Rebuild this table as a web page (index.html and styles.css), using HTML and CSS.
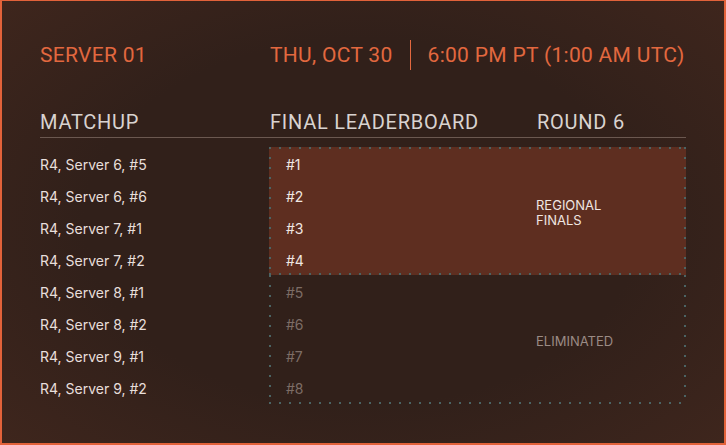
FILE: index.html
```html
<!DOCTYPE html>
<html lang="en">
<head>
<meta charset="utf-8">
<title>Server 01 Bracket</title>
<link rel="stylesheet" href="styles.css">
</head>
<body>
<div class="page">
  <header class="top">
    <div class="server">SERVER 01</div>
    <div class="when">
      <span class="date">THU, OCT 30</span>
      <span class="sep"></span>
      <span class="time">6:00 PM PT (1:00 AM UTC)</span>
    </div>
  </header>
  <div class="cols">
    <div class="col-h">MATCHUP</div>
    <div class="col-h">FINAL LEADERBOARD</div>
    <div class="col-h">ROUND 6</div>
  </div>
  <div class="body">
    <ul class="matchups">
      <li>R4, Server 6, #5</li>
      <li>R4, Server 6, #6</li>
      <li>R4, Server 7, #1</li>
      <li>R4, Server 7, #2</li>
      <li>R4, Server 8, #1</li>
      <li>R4, Server 8, #2</li>
      <li>R4, Server 9, #1</li>
      <li>R4, Server 9, #2</li>
    </ul>
    <div class="board">
      <div class="group advance">
        <ul class="ranks">
          <li>#1</li><li>#2</li><li>#3</li><li>#4</li>
        </ul>
        <div class="label">REGIONAL<br>FINALS</div>
      </div>
      <div class="group out">
        <ul class="ranks">
          <li>#5</li><li>#6</li><li>#7</li><li>#8</li>
        </ul>
        <div class="label">ELIMINATED</div>
      </div>
    </div>
  </div>
</div>
</body>
</html>
```
FILE: styles.css
```css
* { box-sizing: border-box; }
html, body { margin: 0; padding: 0; }
body { background: #3a231c; }

.page {
  width: 726px;
  height: 445px;
  border: 2px solid #e2623a;
  border-top-width: 1px;
  padding: 39px 38px 0 38px;
  background: radial-gradient(ellipse 70% 75% at 50% 50%, #31201a 55%, #3f261d 100%);
  font-family: Inter, "Liberation Sans", sans-serif;
}

.top {
  display: flex;
  align-items: center;
  height: 30px;
  white-space: nowrap;
  font-family: Roboto, "Liberation Sans", sans-serif;
  font-size: 21px;
  letter-spacing: 0.3px;
  color: #e2683f;
}
.server { width: 230px; flex: none; }
.when { display: flex; align-items: center; flex: none; }
.sep {
  width: 1px;
  height: 30px;
  background: #e2683f;
  margin: 0 17px 0 17px;
}

.cols {
  display: grid;
  grid-template-columns: 230px 267px 1fr;
  height: 32px;
  margin-top: 36px;
  line-height: 32px;
  border-bottom: 1px solid #6b5850;
  font-family: Roboto, "Liberation Sans", sans-serif;
  font-size: 20px;
  letter-spacing: 0.75px;
  color: #d9d3d0;
}

.body {
  display: flex;
  margin-top: 9px;
}
.matchups {
  list-style: none;
  margin: 0;
  padding: 2px 0 0;
  width: 229px;
}
.matchups li {
  height: 32px;
  line-height: 32px;
  font-size: 14px;
  color: #e8dfdb;
}

.board { flex: 1; }
.group {
  display: grid;
  grid-template-columns: 250px 1fr;
  align-items: center;
  height: 128px;
  padding: 2px 0 0 17px;
  background-image:
    repeating-linear-gradient(90deg, #4b6464 0 2px, transparent 2px 10px),
    repeating-linear-gradient(90deg, #4b6464 0 2px, transparent 2px 10px),
    repeating-linear-gradient(180deg, #4b6464 0 2px, transparent 2px 10px),
    repeating-linear-gradient(180deg, #4b6464 0 2px, transparent 2px 10px);
  background-size: 100% 2px, 100% 2px, 2px 100%, 2px 100%;
  background-position: left top, left bottom, left top, right top;
  background-repeat: no-repeat;
}
.advance { background-color: #5e2e20; }
.out { height: 129px; background-size: 0 0, 100% 2px, 2px 100%, 2px 100%; }

.ranks {
  list-style: none;
  margin: 0;
  padding: 0;
}
.ranks li {
  height: 32px;
  line-height: 32px;
  font-size: 14px;
  color: #f0e7e2;
}
.out .ranks li { color: #7d6d66; }

.label {
  font-size: 13px;
  line-height: 15px;
  color: #f0e6e1;
}
.out .label { color: #9b8b85; }
```
